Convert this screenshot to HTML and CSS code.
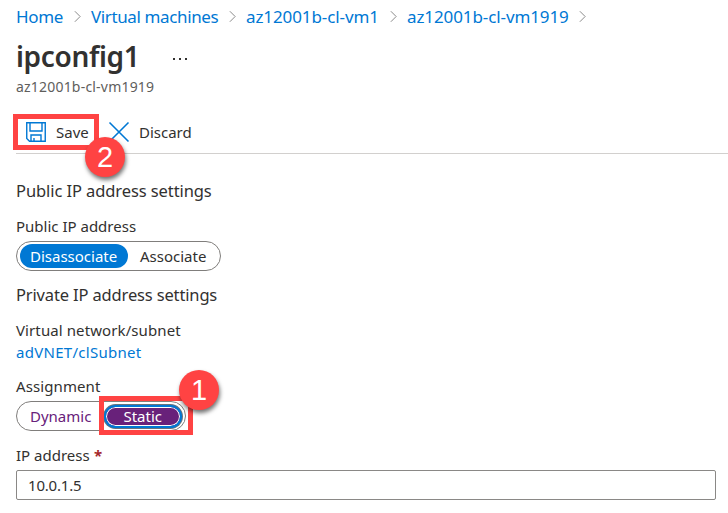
FILE: index.html
```html
<!DOCTYPE html>
<html lang="en">
<head>
<meta charset="utf-8">
<title>ipconfig1</title>
<link rel="stylesheet" href="styles.css">
</head>
<body>
<nav class="breadcrumb">
  <a class="crumb crumb-home">Home</a>
  <svg class="chevron" viewBox="0 0 8 14"><path d="M1 1l6 6-6 6"/></svg>
  <a class="crumb crumb-machines">Virtual machines</a>
  <svg class="chevron" viewBox="0 0 8 14"><path d="M1 1l6 6-6 6"/></svg>
  <a class="crumb crumb-vm">az12001b-cl-vm1</a>
  <svg class="chevron" viewBox="0 0 8 14"><path d="M1 1l6 6-6 6"/></svg>
  <a class="crumb crumb-nic">az12001b-cl-vm1919</a>
  <svg class="chevron" viewBox="0 0 8 14"><path d="M1 1l6 6-6 6"/></svg>
</nav>
<header class="header">
  <div class="title-row">
    <h1 class="title">ipconfig1</h1>
    <svg class="more" viewBox="0 0 14 2"><path d="M0 0h2v2H0zM6 0h2v2H6zM12 0h2v2h-2z"/></svg>
  </div>
  <p class="subtitle">az12001b-cl-vm1919</p>
</header>
<div class="toolbar">
  <div class="command save">
    <svg class="save-icon" viewBox="0 0 20 20"><path d="M.75.75h18.5v18.5H3.5L.75 16.5zM4 1v8h12V1M5 19v-6h10v6M8 19v-3"/></svg>
    <span class="save-text">Save</span>
    <span class="badge badge-two">2</span>
  </div>
  <div class="command discard">
    <svg class="discard-icon" viewBox="0 0 20 20"><path d="M.5.5l19 19M19.5.5l-19 19"/></svg>
    <span class="discard-text">Discard</span>
  </div>
</div>
<main class="form">
  <h2 class="section"><span class="public-heading">Public IP address settings</span></h2>
  <div class="label label-public"><span class="public-label">Public IP address</span></div>
  <div class="toggle toggle-public">
    <span class="option selected"><span class="disassociate">Disassociate</span></span>
    <span class="option other"><span class="associate">Associate</span></span>
  </div>
  <h2 class="section section-private"><span class="private-heading">Private IP address settings</span></h2>
  <div class="label label-network"><span class="network">Virtual network/subnet</span></div>
  <div class="label"><a class="subnet">adVNET/clSubnet</a></div>
  <div class="label label-assignment"><span class="assignment">Assignment</span></div>
  <div class="toggle toggle-assignment">
    <span class="option dynamic-option"><span class="dynamic">Dynamic</span></span>
    <span class="option static-option"><span class="static">Static</span></span>
    <span class="highlight"><span class="badge badge-one">1</span></span>
  </div>
  <div class="label label-ip"><span class="ip-label">IP address</span><span class="required">*</span></div>
  <div class="input"><span class="value">10.0.1.5</span></div>
</main>
</body>
</html>
```
FILE: styles.css
```css
* { box-sizing: border-box; }
body {
  margin: 0;
  height: 513px;
  overflow: hidden;
  background: #fff;
  color: #323130;
  font: 15px "Noto Sans", sans-serif;
  white-space: nowrap;
}
svg { flex: none; overflow: visible; fill: none; }
h1, h2, p { margin: 0; font-weight: 400; }
.breadcrumb { display: flex; align-items: center; height: 33px; padding-left: 16px; }
.crumb { flex: none; color: #0078d4; font-size: 17px; letter-spacing: -.1px; }
.crumb-home { width: 58px; letter-spacing: -.35px; }
.crumb-machines { width: 138px; letter-spacing: -.38px; }
.crumb-vm { width: 144px; }
.crumb-nic { width: 172px; }
.chevron { width: 7px; height: 13px; margin-right: 10px; stroke: #858585; stroke-width: 1.1; }
.title-row { display: flex; align-items: center; height: 46px; padding-left: 16px; }
.title { width: 157px; font-size: 28px; font-weight: 600; letter-spacing: -.35px; line-height: 46px; }
.more { width: 14px; height: 2px; margin-top: 5px; fill: #323130; }
.subtitle { height: 15px; padding-left: 16px; color: #605e5c; font-size: 14px; letter-spacing: .2px; line-height: 15px; }
.toolbar { display: flex; height: 40px; margin: 20px 0 0 13px; }
.toolbar::after { content: ""; align-self: flex-end; width: 712px; height: 1px; margin-left: -189px; background: #d2d0ce; }
.command { display: flex; flex: none; align-items: center; height: 36px; }
.save { position: relative; z-index: 2; width: 86px; padding-left: 8px; border: 5px solid #ff4343; }
.save-icon { width: 20px; height: 20px; margin-right: 10px; stroke: #0078d4; stroke-width: 1.4; }
.discard { width: 106px; padding-left: 10px; }
.discard-icon { width: 20px; height: 20px; margin-right: 10px; stroke: #0078d4; stroke-width: 1.6; }
.badge {
  position: absolute;
  z-index: 3;
  width: 40px;
  height: 40px;
  border-radius: 50%;
  background: #ff4343;
  box-shadow: 1px 3px 4px rgba(0, 0, 0, .55);
  color: #fff;
  font: 29px/40px "Liberation Sans", sans-serif;
  text-align: center;
}
.badge-two { left: 67px; top: 18px; }
.badge-one { left: 75px; top: -31px; }
.form { padding: 26px 12px 0 16px; }
.section { height: 22px; font-size: 16.5px; letter-spacing: -.09px; line-height: 22px; }
.section-private { margin-top: 13px; letter-spacing: -.15px; }
.label { display: flex; height: 22px; line-height: 22px; }
.label-public { margin-top: 13px; }
.label-network { margin-top: 13px; letter-spacing: .1px; }
.label-assignment { margin-top: 12px; letter-spacing: .1px; }
.label-ip { margin-top: 13px; }
.toggle { position: relative; display: flex; align-items: center; height: 30px; padding: 0 3px; border: 1px solid #807e7c; border-radius: 15px; }
.toggle-public { width: 205px; margin-top: 4px; }
.toggle-assignment { width: 170px; margin-top: 4px; }
.option { display: flex; align-items: center; height: 24px; padding-left: 10px; border-radius: 12px; }
.selected { width: 108px; background: #0078d4; color: #fff; }
.other { padding-left: 12px; }
.dynamic-option { width: 85px; color: #68217a; }
.static-option {
  width: 78px;
  height: 23px;
  padding-left: 17px;
  border: 2px solid #0078d4;
  background: #68217a;
  box-shadow: inset 0 0 0 1px #fff, 0 0 0 1px #68737d;
  color: #fff;
}
.highlight { position: absolute; left: 82px; top: -6px; width: 94px; height: 39px; border: 5px solid #ff4343; }
.subnet { color: #0078d4; letter-spacing: .28px; }
.required { margin-left: 5px; color: #a4262c; font-size: 15px; font-weight: 700; }
.ip-label { width: 73px; }
.value { letter-spacing: -.2px; }
.input { display: flex; align-items: center; height: 30px; margin-top: 4px; padding-left: 11px; border: 1px solid #8a8886; border-radius: 2px; }
```
